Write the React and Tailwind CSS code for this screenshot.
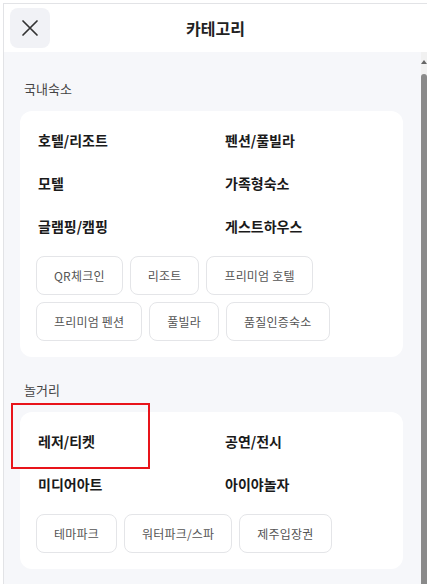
import React from 'react';

const font = { fontFamily: '"Noto Sans CJK KR", "Noto Sans", sans-serif' };

const Chip = ({ label }) => (
  <div className="h-[39px] px-[17px] flex items-center rounded-lg border border-[#e4e5e8] bg-white text-[12px] tracking-[0.2px] text-[#555] whitespace-nowrap">
    {label}
  </div>
);

const Section = ({ title, items, chips }) => (
  <div>
    <div className="pl-[20px] h-[18px] leading-[18px] text-[13px] text-[#444]">{title}</div>
    <div className="mt-[13px] mr-[18px] ml-[16px] bg-white rounded-xl pt-[19px] pb-[16px] px-4">
      <div className="grid grid-cols-[187px_1fr] gap-y-[23px] pl-[2px]">
        {items.map((it) => (
          <div key={it} className="h-[20px] leading-[20px] text-[14px] font-bold text-[#1a1a1a]">
            {it}
          </div>
        ))}
      </div>
      <div className="mt-[20px] flex flex-col gap-[7px]">
        {chips.map((row, i) => (
          <div key={i} className="flex gap-[7px]">
            {row.map((c) => (
              <Chip key={c} label={c} />
            ))}
          </div>
        ))}
      </div>
    </div>
  </div>
);

export default function App() {
  return (
    <div className="w-[427px] h-[584px] overflow-hidden bg-white pt-[3px] pl-[3px]" style={font}>
      <div className="relative h-full border-t border-l border-[#e2e3e6] flex flex-col">
        <div className="h-[48px] shrink-0 flex items-center relative bg-white">
          <button className="ml-[6px] w-[40px] h-[40px] rounded-lg bg-[#f1f2f6] flex items-center justify-center">
            <svg width="18" height="18" viewBox="0 0 18 18" fill="none" stroke="#333" strokeWidth="1.7" strokeLinecap="round">
              <path d="M2 2 L16 16 M16 2 L2 16" />
            </svg>
          </button>
          <div className="absolute inset-x-0 text-center text-[16px] font-bold text-[#222] pointer-events-none">
            카테고리
          </div>
        </div>
        <div className="flex-1 flex bg-[#f6f7fa] min-h-0">
          <div className="flex-1 pt-[28px] flex flex-col gap-[24px]">
            <Section
              title="국내숙소"
              items={['호텔/리조트', '펜션/풀빌라', '모텔', '가족형숙소', '글램핑/캠핑', '게스트하우스']}
              chips={[
                ['QR체크인', '리조트', '프리미엄 호텔'],
                ['프리미엄 펜션', '풀빌라', '품질인증숙소'],
              ]}
            />
            <Section
              title="놀거리"
              items={['레저/티켓', '공연/전시', '미디어아트', '아이야놀자']}
              chips={[['테마파크', '워터파크/스파', '제주입장권']]}
            />
          </div>
          <div className="w-[6px] shrink-0 flex flex-col bg-[#f1f1f1]">
            <div className="h-[22px] flex items-start justify-center pt-[8px]">
              <div className="w-0 h-0 border-l-[3px] border-r-[3px] border-b-[4px] border-l-transparent border-r-transparent border-b-[#666]" />
            </div>
            <div className="flex-1 bg-[#8a8a8a] rounded-t-sm" />
          </div>
        </div>
        <div className="absolute left-[7px] top-[399px] w-[139px] h-[66px] border-2 border-[#e8141a] pointer-events-none" />
      </div>
    </div>
  );
}
